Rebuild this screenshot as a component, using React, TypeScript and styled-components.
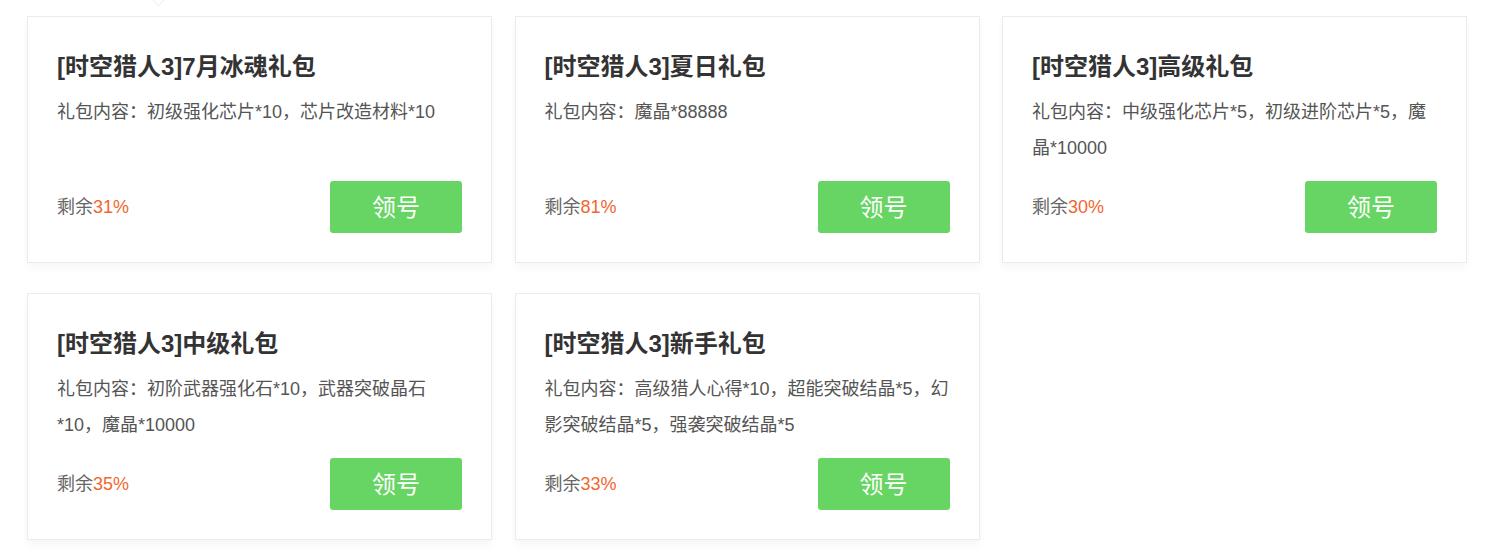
import * as React from 'react';
import styled, { createGlobalStyle } from 'styled-components';

const GlobalStyle = createGlobalStyle`
  html, body {
    margin: 0;
    padding: 0;
    background: #fff;
  }
  body {
    font-family: "Liberation Sans", Arial, "Noto Sans CJK SC", sans-serif;
  }
`;

const Page = styled.div`
  position: relative;
  padding: 16px 0 0 27px;
  overflow: hidden;
  height: 555px;
  box-sizing: border-box;
`;

const Pointer = styled.div`
  position: absolute;
  top: -7px;
  left: 153px;
  width: 10px;
  height: 10px;
  background: #fff;
  border-right: 1px solid #f0f0f0;
  border-bottom: 1px solid #f0f0f0;
  transform: rotate(45deg);
`;

const Grid = styled.div`
  display: grid;
  grid-template-columns: repeat(3, 465px);
  column-gap: 22.5px;
  row-gap: 30px;
`;

const Card = styled.div`
  box-sizing: border-box;
  height: 247px;
  padding: 33px 29px 28px;
  background: #fff;
  border: 1px solid #ebebeb;
  box-shadow: 0 5px 8px rgba(0, 0, 0, 0.035);
  display: flex;
  flex-direction: column;
`;

const Title = styled.h3`
  margin: 0;
  font-size: 24px;
  line-height: 34px;
  font-weight: 700;
  color: #333;
`;

const Desc = styled.p`
  margin: 10px 0 0;
  height: 72px;
  font-size: 18px;
  line-height: 36px;
  color: #555;
`;

const Footer = styled.div`
  margin-top: 15px;
  display: flex;
  justify-content: space-between;
  align-items: center;
`;

const Remain = styled.span`
  font-size: 18px;
  line-height: 24px;
  color: #666;
`;

const Percent = styled.span`
  color: #f2662f;
`;

const ClaimButton = styled.button`
  width: 132px;
  height: 52px;
  padding: 0 0 4px;
  border: none;
  border-radius: 3px;
  background: #67d563;
  color: #fff;
  font-family: inherit;
  font-size: 24px;
  cursor: pointer;
`;

interface IGift {
  title: string;
  content: string;
  remain: number;
}

const gifts: IGift[] = [
  { title: '[时空猎人3]7月冰魂礼包', content: '初级强化芯片*10，芯片改造材料*10', remain: 31 },
  { title: '[时空猎人3]夏日礼包', content: '魔晶*88888', remain: 81 },
  { title: '[时空猎人3]高级礼包', content: '中级强化芯片*5，初级进阶芯片*5，魔晶*10000', remain: 30 },
  { title: '[时空猎人3]中级礼包', content: '初阶武器强化石*10，武器突破晶石*10，魔晶*10000', remain: 35 },
  { title: '[时空猎人3]新手礼包', content: '高级猎人心得*10，超能突破结晶*5，幻影突破结晶*5，强袭突破结晶*5', remain: 33 },
];

const GiftCard = ({ gift }: { gift: IGift }): React.ReactElement => (
  <Card>
    <Title>{gift.title}</Title>
    <Desc>礼包内容：{gift.content}</Desc>
    <Footer>
      <Remain>
        剩余<Percent>{gift.remain}%</Percent>
      </Remain>
      <ClaimButton>领号</ClaimButton>
    </Footer>
  </Card>
);

const App = (): React.ReactElement => (
  <>
    <GlobalStyle />
    <Page>
      <Pointer />
      <Grid>
        {gifts.map((gift) => (
          <GiftCard key={gift.title} gift={gift} />
        ))}
      </Grid>
    </Page>
  </>
);

export default App;
